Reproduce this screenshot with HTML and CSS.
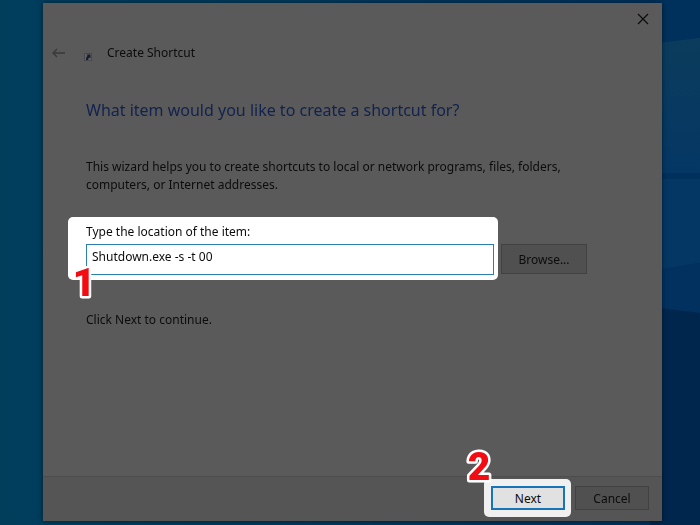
FILE: index.html
```html
<!doctype html>
<html lang="en">
<head>
	<meta charset="UTF-8">
	<meta name="viewport" content="width=device-width, initial-scale=1.0">
	<title>Create Shortcut</title>
	<link rel="stylesheet" href="styles.css">
</head>
<body>
	<svg class="wallpaper" viewBox="0 0 700 525" preserveAspectRatio="none" aria-hidden="true">
		<defs>
			<linearGradient id="base">
				<stop offset="0" stop-color="#003e5c"/>
				<stop offset=".3" stop-color="#003c5c"/>
				<stop offset="1" stop-color="#00305c"/>
			</linearGradient>
			<linearGradient id="right" x1="0" y1="0" x2="0" y2="1">
				<stop offset="0" stop-color="#0b3c5c"/>
				<stop offset="1" stop-color="#053765"/>
			</linearGradient>
		</defs>
		<rect width="700" height="525" fill="url(#base)"/>
		<path d="M650 44L700 38V173H650Z" fill="url(#right)"/>
		<path d="M650 179H700V263L650 271Z" fill="#053764"/>
		<path d="M650 271L700 263V313L650 307Z" fill="#023160"/>
		<path d="M650 307L700 313V525H650Z" fill="#00264d"/>
	</svg>
	<main class="dialog">
		<div class="title-bar">
			<button type="button" class="icon-button" aria-label="Close">
				<svg width="12" height="12" viewBox="0 0 12 12"><path d="M1 1L11 11M11 1L1 11" fill="none" stroke="#0c0c0c" stroke-width="1.2"/></svg>
			</button>
		</div>
		<header class="header">
			<button type="button" class="icon-button" aria-label="Back">
				<svg width="14" height="10" viewBox="0 0 14 10"><path d="M5 1L1 5L5 9M1 5H13" fill="none" stroke="#393939" stroke-width="1.4"/></svg>
			</button>
			<svg class="shortcut-icon" width="8" height="8" viewBox="0 0 8 8" aria-hidden="true">
				<rect x=".5" y=".5" width="7" height="7" fill="#626366" stroke="#48494c"/>
				<path d="M2.5 1.5H6.5V5.5L5.5 4.6Q4 5.4 4 7H2Q1.6 4.4 3.6 2.8Z" fill="#171c30"/>
			</svg>
			<span>Create Shortcut</span>
		</header>
		<form class="content">
			<h1>What item would you like to create a shortcut for?</h1>
			<p class="intro">This wizard helps you to create shortcuts to local or network programs, files, folders, computers, or Internet addresses.</p>
			<div class="location-row">
				<div class="spotlight location">
					<label for="location">Type the location of the item:</label>
					<input type="text" id="location" value="Shutdown.exe -s -t 00" spellcheck="false">
					<svg class="step step-one" width="24" height="40" viewBox="0 0 24 40" role="img">
						<text x="12" y="34" text-anchor="middle">1</text>
					</svg>
				</div>
				<button type="button" class="browse">Browse...</button>
			</div>
			<p>Click Next to continue.</p>
		</form>
		<footer class="footer">
			<div class="spotlight next-box">
				<button type="button" class="next">Next</button>
				<svg class="step step-two" width="32" height="40" viewBox="0 0 32 40" role="img">
					<text x="16" y="34" text-anchor="middle">2</text>
				</svg>
			</div>
			<button type="button" class="cancel">Cancel</button>
		</footer>
	</main>
</body>
</html>
```

FILE: styles.css
```css
* {
	box-sizing: border-box;
	margin: 0;
	padding: 0;
}
body {
	display: flex;
	min-height: 100vh;
	padding: 3px 38px 4px 43px;
	background-color: #00305c;
	color: #0c0c0c;
	font: 12px/18px "Noto Sans", "Open Sans", sans-serif;
}
.wallpaper {
	position: fixed;
	inset: 0;
	z-index: -1;
	width: 100%;
	height: 100%;
}
.dialog {
	flex: 1;
	display: flex;
	flex-direction: column;
	min-width: 0;
	background-color: #5a5a5a;
	box-shadow: 0 0 5px rgba(0, 0, 0, 0.5);
}
button, input {
	font: inherit;
	color: inherit;
}
button {
	height: 24px;
	width: 74px;
	padding-top: 1px;
	background-color: #505050;
	border: 1px solid #414141;
}
.icon-button {
	display: flex;
	align-items: center;
	justify-content: center;
	width: 14px;
	padding: 0;
	background: none;
	border: none;
}
.title-bar {
	display: flex;
	justify-content: flex-end;
	padding: 4px 12px 0;
}
.header {
	display: flex;
	align-items: center;
	padding: 10px 9px;
}
.shortcut-icon {
	margin: 8px 15px 0 18px;
}
.content {
	flex: 1;
	padding: 23px 25px 24px 43px;
}
h1 {
	color: #12224f;
	font-size: 16px;
	font-weight: 400;
	line-height: 24px;
}
.intro {
	max-width: 500px;
	margin: 36px 0 23px;
}
.location-row {
	display: flex;
	align-items: flex-end;
	gap: 3px;
	margin: 0 50px 31px -18px;
}
.spotlight {
	position: relative;
	border-radius: 5px;
}
.location {
	flex: 1;
	padding: 6px 4px 5px 18px;
	background-color: #fff;
}
.location label {
	display: block;
	margin-bottom: 3px;
}
.location input {
	display: block;
	width: 100%;
	height: 31px;
	padding: 0 5px 6px;
	background-color: #fff;
	border: 1px solid #2b7fae;
	outline: none;
}
.browse {
	width: 86px;
	height: 30px;
	margin-bottom: 6px;
}
.footer {
	display: flex;
	align-items: center;
	justify-content: flex-end;
	gap: 4px;
	padding: 2px 13px 4px;
	background-color: #555;
	border-top: 1px solid #4d4d4d;
}
.next-box {
	padding: 7px 6px 7px 7px;
	background-color: #f0f0f0;
}
.next {
	display: block;
	background-color: #e1e1e1;
	border: 2px solid #1874b8;
}
.step {
	position: absolute;
	overflow: visible;
	font: 900 39px Roboto, sans-serif;
	fill: #f20d12;
	stroke: #fff;
	stroke-width: 5px;
	stroke-linejoin: round;
	paint-order: stroke;
}
.step-one {
	left: 4px;
	top: 45px;
}
.step-two {
	left: -21px;
	top: -33px;
}
```
